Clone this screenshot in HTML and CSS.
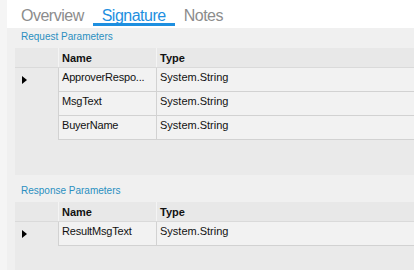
FILE: index.html
```html
<!DOCTYPE html>
<html>
<head>
<meta charset="utf-8">
<link rel="stylesheet" href="styles.css">
</head>
<body>
<div class="app">
  <div class="strip"></div>
  <div class="main">
    <div class="tabs">
      <div class="tab">Overview</div>
      <div class="tab active">Signature</div>
      <div class="tab">Notes</div>
    </div>
    <div class="content">
      <div class="label">Request Parameters</div>
      <div class="grid grid-req">
        <div class="hdr">
          <div class="rh"></div>
          <div class="hc name">Name</div>
          <div class="hc type">Type</div>
        </div>
        <div class="row">
          <div class="rh"><span class="arrow"></span></div>
          <div class="cell name">ApproverRespo...</div>
          <div class="cell type">System.String</div>
        </div>
        <div class="row">
          <div class="rh"></div>
          <div class="cell name">MsgText</div>
          <div class="cell type">System.String</div>
        </div>
        <div class="row">
          <div class="rh"></div>
          <div class="cell name">BuyerName</div>
          <div class="cell type">System.String</div>
        </div>
      </div>
      <div class="label label-2">Response Parameters</div>
      <div class="grid grid-res">
        <div class="hdr">
          <div class="rh"></div>
          <div class="hc name">Name</div>
          <div class="hc type">Type</div>
        </div>
        <div class="row">
          <div class="rh"><span class="arrow"></span></div>
          <div class="cell name">ResultMsgText</div>
          <div class="cell type">System.String</div>
        </div>
      </div>
    </div>
  </div>
</div>
</body>
</html>
```
FILE: styles.css
```css
html, body {
  margin: 0;
  padding: 0;
  height: 270px;
  overflow: hidden;
  background: #f5f5f5;
  font-family: "Liberation Sans", Arial, sans-serif;
}
.app {
  display: flex;
  height: 270px;
}
.strip {
  width: 7px;
  flex: none;
  background: #f5f5f5;
}
.main {
  flex: 1;
  display: flex;
  flex-direction: column;
  min-width: 0;
}
.tabs {
  height: 28px;
  background: #ffffff;
  display: flex;
  align-items: flex-start;
  padding-left: 5px;
  flex: none;
}
.tab {
  padding: 8px 9px 0 9px;
  font-size: 16px;
  letter-spacing: -0.5px;
  line-height: 15px;
  color: #8c8c8c;
  border-bottom: 3px solid transparent;
}
.tab.active {
  color: #1e8fe0;
  border-bottom-color: #1e8fe0;
}
.content {
  flex: 1;
  background: #f0f0f0;
  padding-left: 8px;
  display: flex;
  flex-direction: column;
}
.label {
  height: 20px;
  line-height: 18px;
  padding-left: 6px;
  font-size: 10px;
  color: #2a8fc0;
}
.label-2 {
  margin-top: 7px;
}
.grid {
  background: #eaeaea;
  display: flex;
  flex-direction: column;
}
.grid-req {
  height: 127px;
}
.grid-res {
  flex: 1;
}
.hdr {
  display: flex;
  height: 19px;
  background: #e8e8e8;
  border-bottom: 1px solid #dadada;
}
.hc {
  font-size: 11px;
  font-weight: bold;
  color: #111;
  line-height: 14px;
  padding: 3px 0 0 3px;
  border-left: 1px solid #f4f4f4;
}
.rh {
  width: 43px;
  flex: none;
  display: flex;
  align-items: center;
  padding-left: 7px;
  box-sizing: border-box;
}
.name {
  width: 98px;
  flex: none;
  box-sizing: border-box;
}
.type {
  flex: 1;
}
.row {
  display: flex;
  height: 24px;
}
.cell {
  background: #f2f2f2;
  border-left: 1px solid #d2d2d2;
  border-bottom: 1px solid #d2d2d2;
  font-size: 11px;
  line-height: 14px;
  padding: 2px 0 0 3px;
  color: #111;
  white-space: nowrap;
  overflow: hidden;
}
.cell.name {
  letter-spacing: -0.2px;
}
.arrow {
  width: 0;
  height: 0;
  border-left: 5px solid #000;
  border-top: 4.5px solid transparent;
  border-bottom: 4.5px solid transparent;
}
```
